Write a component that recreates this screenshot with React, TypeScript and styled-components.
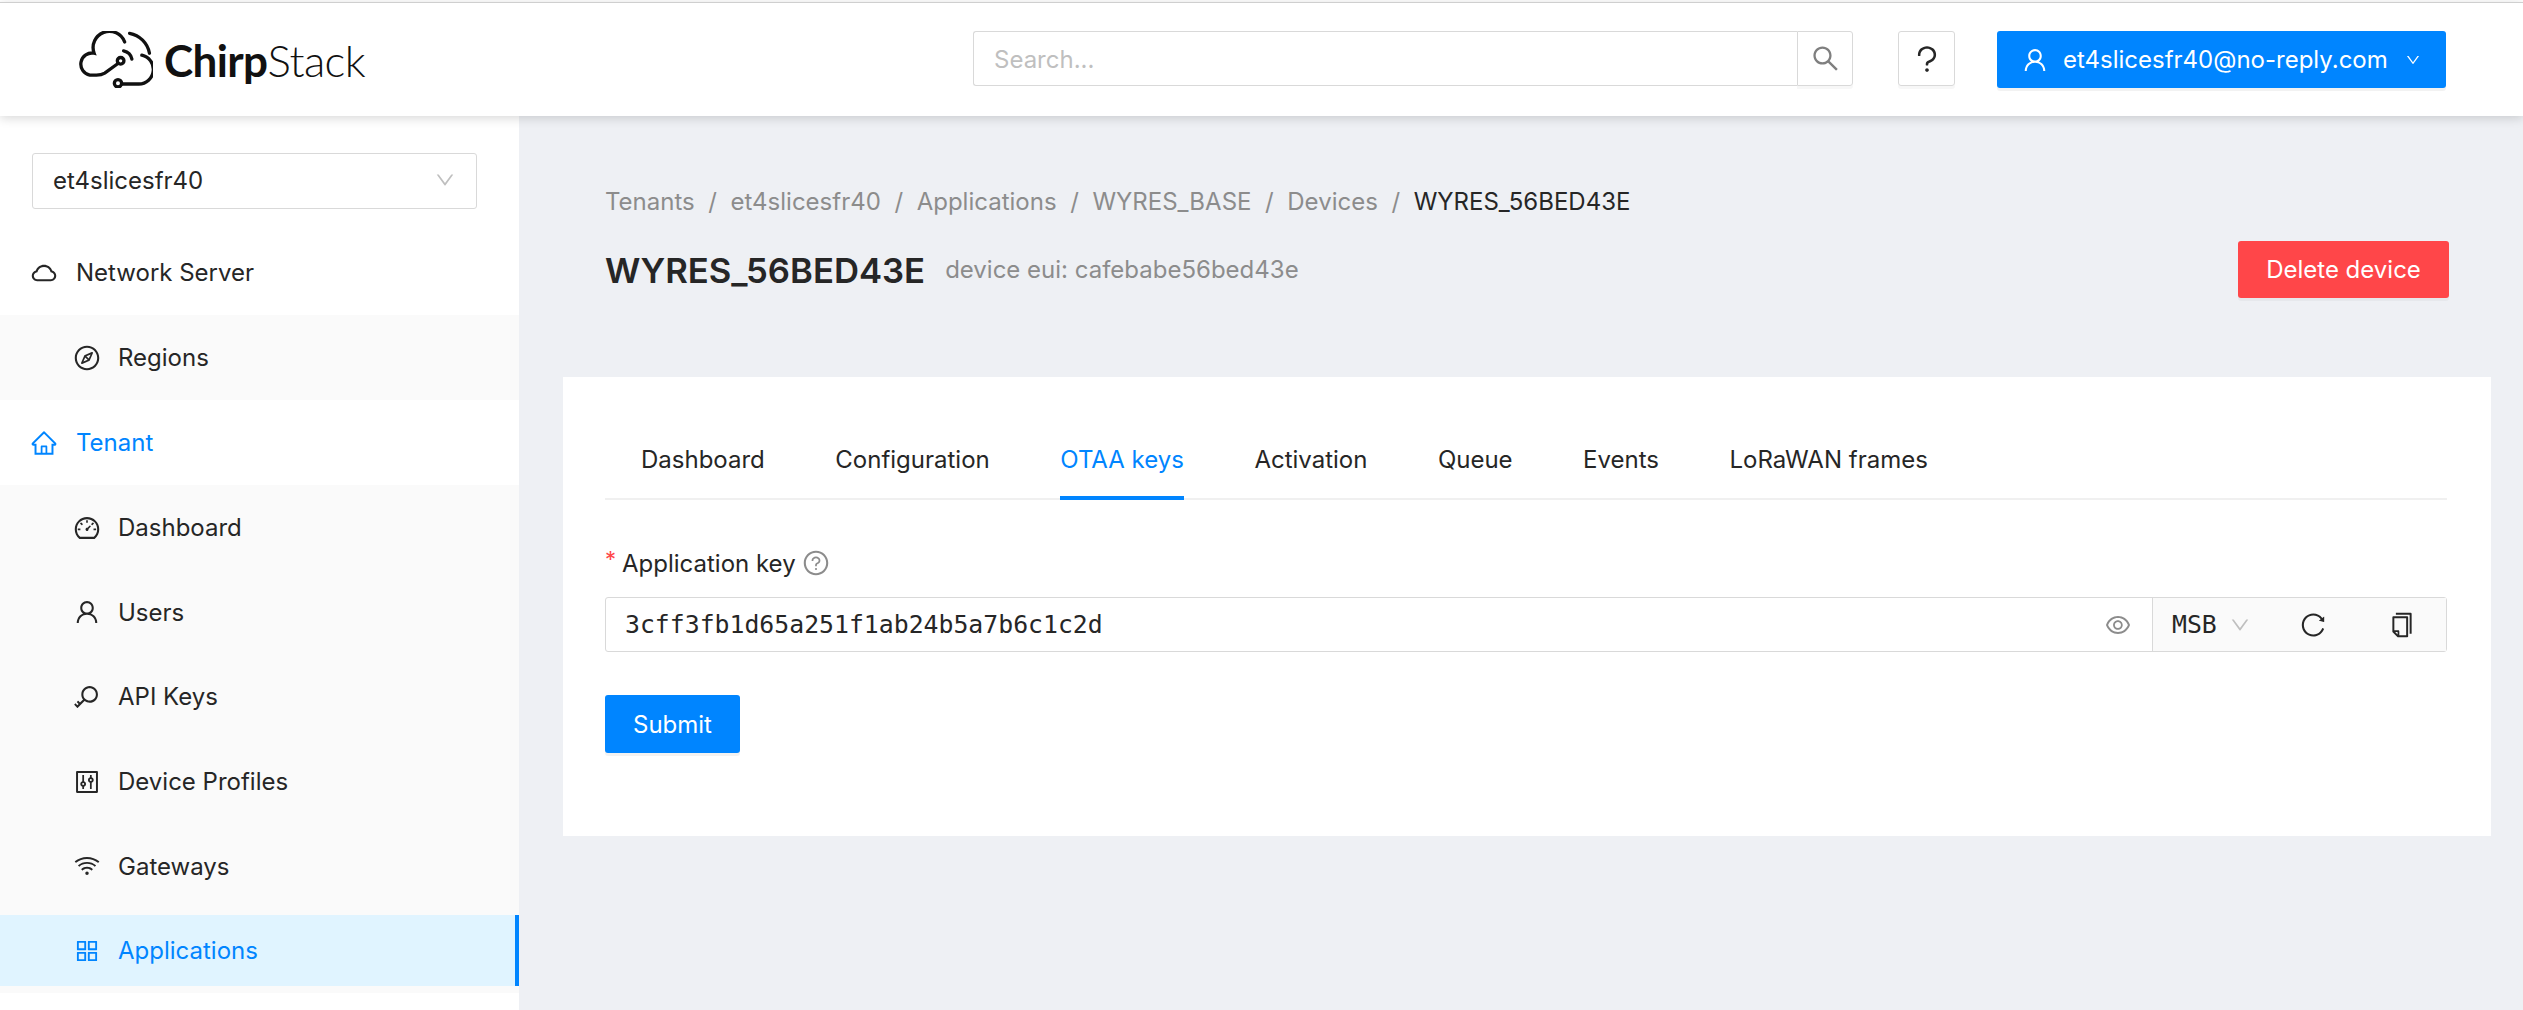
import React from "react";
import styled, { createGlobalStyle } from "styled-components";
import {
  AiOutlineAppstore,
  AiOutlineCloud,
  AiOutlineCompass,
  AiOutlineControl,
  AiOutlineCopy,
  AiOutlineDashboard,
  AiOutlineDown,
  AiOutlineEye,
  AiOutlineHome,
  AiOutlineKey,
  AiOutlineQuestion,
  AiOutlineQuestionCircle,
  AiOutlineReload,
  AiOutlineSearch,
  AiOutlineUser,
  AiOutlineWifi,
} from "react-icons/ai";

const BLUE = "#0085ff";
const RED = "#ff4649";

const tenantItems = [
  { label: "Dashboard", icon: <AiOutlineDashboard /> },
  { label: "Users", icon: <AiOutlineUser /> },
  { label: "API Keys", icon: <AiOutlineKey /> },
  { label: "Device Profiles", icon: <AiOutlineControl /> },
  { label: "Gateways", icon: <AiOutlineWifi /> },
  { label: "Applications", icon: <AiOutlineAppstore />, active: true },
];

const crumbs = ["Tenants", "et4slicesfr40", "Applications", "WYRES_BASE", "Devices"];
const tabs = ["Dashboard", "Configuration", "OTAA keys", "Activation", "Queue", "Events", "LoRaWAN frames"];

const Logo = () => (
  <LogoWrap>
    <svg width="75" height="57" viewBox="55 45 225 172" fill="none" stroke="#111" strokeWidth="10" strokeLinecap="round">
      <path d="M175 143 L135 172 Q125 178 110 178 H90 A33 33 0 0 1 103 112 A47 47 0 0 1 195 78" />
      <path d="M247 118 A44 44 0 0 1 238 205 H187" />
      <circle cx="183" cy="135" r="10" />
      <circle cx="175" cy="203" r="11" />
      <path d="M192 105 A32 32 0 0 1 217 130" />
      <path d="M210 52 A75 75 0 0 1 270 112" />
    </svg>
    <LogoText>
      <b>Chirp</b>Stack
    </LogoText>
  </LogoWrap>
);

const App = () => {
  return (
    <Page>
      <GlobalStyle />
      <Header>
        <Logo />
        <HeaderActions>
          <SearchBox>
            <SearchInput>Search...</SearchInput>
            <SearchButton>
              <AiOutlineSearch />
            </SearchButton>
          </SearchBox>
          <HelpButton>
            <AiOutlineQuestion />
          </HelpButton>
          <UserButton>
            <AiOutlineUser />
            <span>et4slicesfr40@no-reply.com</span>
            <SmallChevron />
          </UserButton>
        </HeaderActions>
      </Header>
      <Body>
        <Sidebar>
          <TenantSelect>
            <span>et4slicesfr40</span>
            <AiOutlineDown />
          </TenantSelect>
          <TopItem>
            <AiOutlineCloud />
            Network Server
          </TopItem>
          <SubMenu>
            <SubItem>
              <AiOutlineCompass />
              Regions
            </SubItem>
          </SubMenu>
          <TopItem $selected>
            <AiOutlineHome />
            Tenant
          </TopItem>
          <SubMenu>
            {tenantItems.map((item) => (
              <SubItem key={item.label} $active={item.active}>
                {item.icon}
                {item.label}
              </SubItem>
            ))}
          </SubMenu>
        </Sidebar>
        <Main>
          <Breadcrumbs>
            {crumbs.map((crumb) => (
              <React.Fragment key={crumb}>
                <span>{crumb}</span>
                <Separator>/</Separator>
              </React.Fragment>
            ))}
            <CurrentCrumb>WYRES_56BED43E</CurrentCrumb>
          </Breadcrumbs>
          <TitleRow>
            <Title>WYRES_56BED43E</Title>
            <SubTitle>device eui: cafebabe56bed43e</SubTitle>
            <DeleteButton>Delete device</DeleteButton>
          </TitleRow>
          <Card>
            <Tabs>
              {tabs.map((tab) => (
                <Tab key={tab} $active={tab === "OTAA keys"}>
                  {tab}
                </Tab>
              ))}
            </Tabs>
            <FieldLabel>
              <Required>*</Required>
              Application key
              <AiOutlineQuestionCircle />
            </FieldLabel>
            <KeyField>
              <KeyInput>
                <span>3cff3fb1d65a251f1ab24b5a7b6c1c2d</span>
                <AiOutlineEye />
              </KeyInput>
              <KeyAddon>
                <ByteOrder>
                  MSB
                  <AiOutlineDown />
                </ByteOrder>
                <AddonIcon $offset={48}>
                  <AiOutlineReload />
                </AddonIcon>
                <AddonIcon $offset={61}>
                  <AiOutlineCopy />
                </AddonIcon>
              </KeyAddon>
            </KeyField>
            <SubmitButton>Submit</SubmitButton>
          </Card>
        </Main>
      </Body>
    </Page>
  );
};

export default App;

const GlobalStyle = createGlobalStyle`
  html, body {
    margin: 0;
    padding: 0;
    background: #fff;
    font-family: Inter, "Liberation Sans", sans-serif;
    font-size: 24px;
    color: #262626;
  }
  * {
    box-sizing: border-box;
  }
`;

const Page = styled.div`
  height: 1010px;
  overflow: hidden;
  padding-top: 2px;
  display: flex;
  flex-direction: column;
`;

const Header = styled.header`
  position: relative;
  z-index: 2;
  height: 114px;
  flex: none;
  display: flex;
  align-items: center;
  justify-content: space-between;
  padding: 0 77px 0 78px;
  background: #fff;
  border-top: 1px solid #cfcfcf;
  box-shadow: 0 2px 10px rgba(0, 0, 0, 0.16);
`;

const LogoWrap = styled.div`
  display: flex;
  align-items: center;
  gap: 11px;
`;

const LogoText = styled.div`
  font-family: Lato, sans-serif;
  font-size: 44px;
  font-weight: 300;
  letter-spacing: -0.6px;
  color: #111;
  b {
    font-weight: 700;
  }
`;

const HeaderActions = styled.div`
  align-self: flex-start;
  padding-top: 28px;
  display: flex;
  align-items: flex-start;
`;

const SearchBox = styled.div`
  display: flex;
  width: 880px;
  height: 55px;
  margin-right: 45px;
`;

const SearchInput = styled.div`
  flex: 1;
  display: flex;
  align-items: center;
  padding: 2px 0 0 20px;
  color: #bfbfbf;
  border: 1px solid #d9d9d9;
  border-right: none;
  border-radius: 3px 0 0 3px;
`;

const SearchButton = styled.div`
  width: 56px;
  display: flex;
  align-items: center;
  justify-content: center;
  color: #7f7f7f;
  font-size: 31px;
  border: 1px solid #d9d9d9;
  border-radius: 0 3px 3px 0;
  box-shadow: 0 3px 0 rgba(0, 0, 0, 0.03);
`;

const HelpButton = styled.div`
  width: 57px;
  height: 55px;
  margin-right: 42px;
  display: flex;
  align-items: center;
  justify-content: center;
  font-size: 34px;
  border: 1px solid #d9d9d9;
  border-radius: 3px;
  box-shadow: 0 3px 0 rgba(0, 0, 0, 0.03);
`;

const UserButton = styled.div`
  width: 449px;
  height: 57px;
  padding-left: 24px;
  display: flex;
  align-items: center;
  gap: 14px;
  color: #fff;
  background: ${BLUE};
  border-radius: 3px;
  box-shadow: 0 3px 0 rgba(0, 0, 0, 0.05);
  svg {
    font-size: 28px;
  }
`;

const SmallChevron = styled(AiOutlineDown)`
  && {
    font-size: 16px;
    margin-left: 3px;
  }
`;

const Body = styled.div`
  flex: 1;
  display: flex;
  min-height: 0;
  background: #eef0f4;
`;

const Sidebar = styled.aside`
  width: 519px;
  flex: none;
  padding-top: 37px;
  background: #fff;
`;

const TenantSelect = styled.div`
  width: 445px;
  height: 56px;
  margin: 0 0 21px 32px;
  padding: 0 20px 2px;
  display: flex;
  align-items: center;
  justify-content: space-between;
  border: 1px solid #d9d9d9;
  border-radius: 3px;
  svg {
    font-size: 22px;
    color: #bfbfbf;
  }
`;

const TopItem = styled.div<{ $selected?: boolean }>`
  height: 85px;
  display: flex;
  align-items: center;
  gap: 18px;
  padding-left: 30px;
  color: ${(p) => (p.$selected ? BLUE : "#262626")};
  svg {
    font-size: 28px;
  }
`;

const SubMenu = styled.div`
  display: flex;
  flex-direction: column;
  gap: 13.7px;
  padding: 7px 0;
  background: #fafafa;
`;

const SubItem = styled.div<{ $active?: boolean }>`
  height: 71px;
  display: flex;
  align-items: center;
  gap: 17px;
  padding-left: 73px;
  color: ${(p) => (p.$active ? BLUE : "#262626")};
  background: ${(p) => (p.$active ? "#e0f4ff" : "transparent")};
  border-right: 4px solid ${(p) => (p.$active ? BLUE : "transparent")};
  svg {
    font-size: 28px;
  }
`;

const Main = styled.main`
  flex: 1;
  padding: 61px 32px 0 44px;
`;

const Breadcrumbs = styled.div`
  height: 48px;
  margin-left: 42px;
  display: flex;
  align-items: center;
  color: #8c8c8c;
`;

const Separator = styled.span`
  margin: 0 13.6px;
`;

const CurrentCrumb = styled.span`
  color: #262626;
`;

const TitleRow = styled.div`
  height: 57px;
  margin: 16px 42px 79px 42px;
  display: flex;
  align-items: center;
`;

const Title = styled.h1`
  margin: 0 20px 0 0;
  font-size: 34.7px;
  font-weight: 600;
  color: #262626;
`;

const SubTitle = styled.span`
  color: #8c8c8c;
`;

const DeleteButton = styled.div`
  margin-left: auto;
  width: 211px;
  height: 57px;
  display: flex;
  align-items: center;
  justify-content: center;
  color: #fff;
  background: ${RED};
  border-radius: 3px;
  box-shadow: 0 3px 0 rgba(0, 0, 0, 0.03);
`;

const Card = styled.section`
  height: 459px;
  padding: 54px 44px 0 42px;
  background: #fff;
`;

const Tabs = styled.div`
  height: 69px;
  padding-left: 36px;
  display: flex;
  gap: 70.5px;
  border-bottom: 2px solid #f0f0f0;
`;

const Tab = styled.div<{ $active?: boolean }>`
  height: 69px;
  padding-top: 14px;
  color: ${(p) => (p.$active ? BLUE : "#262626")};
  border-bottom: 4px solid ${(p) => (p.$active ? BLUE : "transparent")};
`;

const FieldLabel = styled.div`
  height: 36px;
  margin-top: 45px;
  display: flex;
  align-items: center;
  svg {
    margin-left: 6px;
    font-size: 28px;
    color: #8c8c8c;
  }
`;

const Required = styled.span`
  width: 17px;
  margin-top: -8px;
  font-size: 22px;
  color: ${RED};
`;

const KeyField = styled.div`
  height: 55px;
  margin-top: 16px;
  display: flex;
  border: 1px solid #d9d9d9;
  border-radius: 3px;
`;

const KeyInput = styled.div`
  flex: 1;
  padding: 0 20px 0 19px;
  display: flex;
  align-items: center;
  justify-content: space-between;
  font-family: "DejaVu Sans Mono", monospace;
  font-size: 24.8px;
  svg {
    font-size: 28px;
    color: #8c8c8c;
  }
`;

const KeyAddon = styled.div`
  width: 294px;
  display: flex;
  align-items: center;
  padding-left: 19px;
  background: #fafafa;
  border-left: 1px solid #d9d9d9;
`;

const ByteOrder = styled.div`
  display: flex;
  align-items: center;
  gap: 12px;
  font-family: "DejaVu Sans Mono", monospace;
  font-size: 24.8px;
  svg {
    font-size: 22px;
    color: #bfbfbf;
  }
`;

const AddonIcon = styled.span<{ $offset: number }>`
  margin-left: ${(p) => p.$offset}px;
  display: flex;
  font-size: 28px;
`;

const SubmitButton = styled.div`
  width: 135px;
  height: 58px;
  margin-top: 43px;
  display: flex;
  align-items: center;
  justify-content: center;
  color: #fff;
  background: ${BLUE};
  border-radius: 3px;
  box-shadow: 0 3px 0 rgba(0, 0, 0, 0.05);
`;
